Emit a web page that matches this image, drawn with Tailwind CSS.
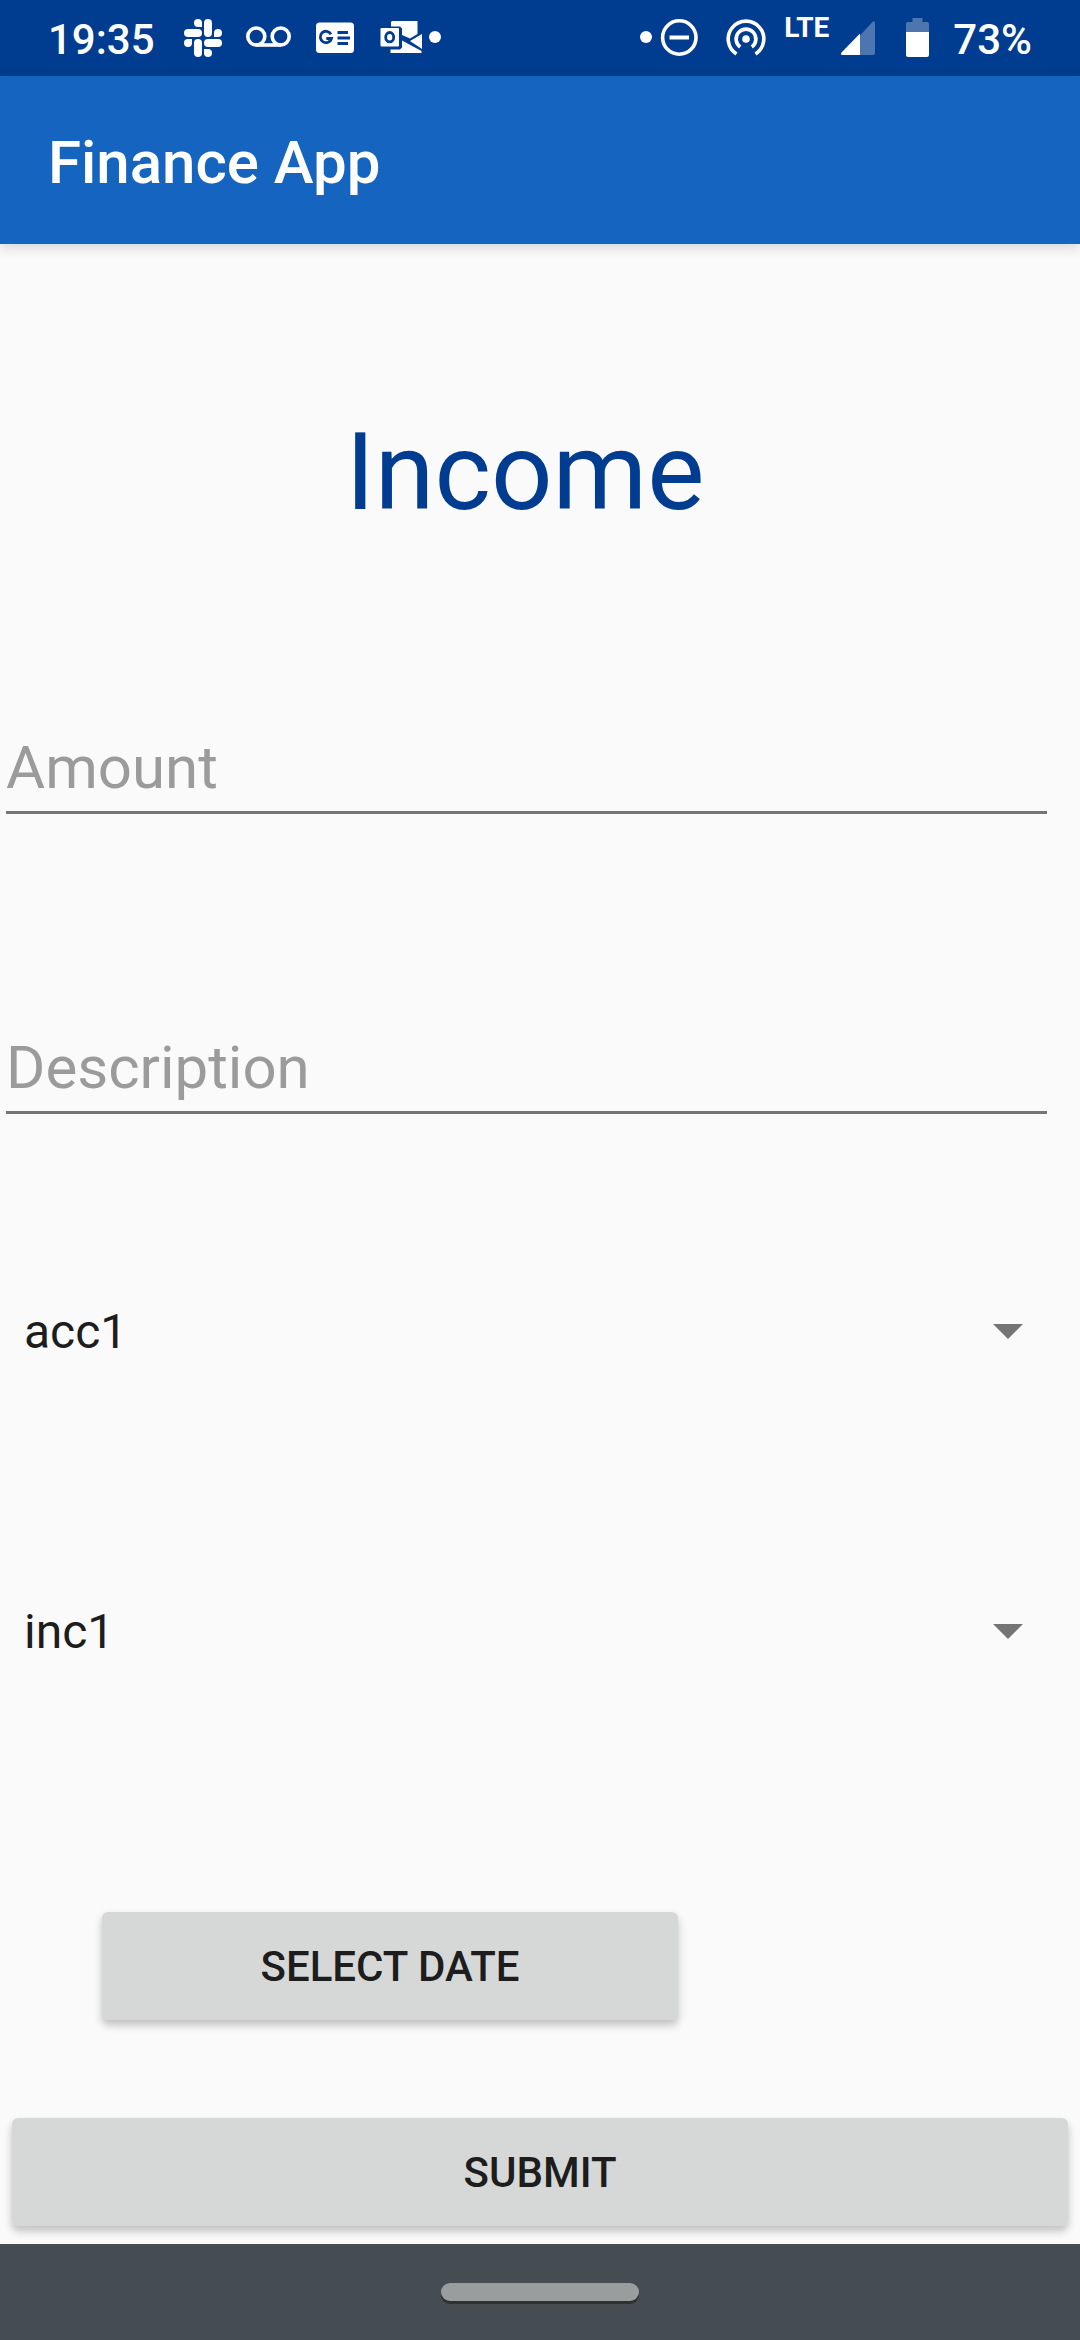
<!DOCTYPE html>
<html lang="en">
<head>
<meta charset="utf-8">
<meta name="viewport" content="width=device-width, initial-scale=1">
<title>Finance App</title>
<script src="https://cdn.jsdelivr.net/npm/@tailwindcss/browser@4"></script>
</head>
<body class="flex min-h-screen flex-col bg-[#fafafa] font-[Roboto,sans-serif] text-[#1d1d1d]">

<!-- System status bar -->
<div class="flex h-[76px] items-center justify-between bg-[#003c8f] px-12 text-[42px] leading-[48px] font-medium text-white">
  <div class="flex items-center">
    <span class="pt-1">19:35</span>
    <svg class="ml-[29px] h-[76px] w-[38px]" viewBox="184 0 38 76" fill="currentColor" aria-hidden="true">
      <rect x="204" y="19" width="8" height="18" rx="4"/>
      <path d="M202 27h-4a4 4 0 1 1 4-4z"/>
      <rect x="184" y="29" width="18" height="8" rx="4"/>
      <path d="M214 37v-4a4 4 0 1 1 4 4z"/>
      <rect x="204" y="39" width="18" height="8" rx="4"/>
      <path d="M204 49h4a4 4 0 1 1-4 4z"/>
      <rect x="194" y="39" width="8" height="18" rx="4"/>
      <path d="M192 39v4a4 4 0 1 1-4-4z"/>
    </svg>
    <svg class="ml-6 h-[76px] w-[45px]" viewBox="246 0 45 76" fill="none" stroke="currentColor" stroke-width="3.6" aria-hidden="true">
      <circle cx="256.300" cy="36.500" r="8.500"/><circle cx="280.700" cy="36.500" r="8.500"/><path d="M256 45h25"/>
    </svg>
    <svg class="ml-[25px] h-[76px] w-[38px]" viewBox="316 0 38 76" fill="none" aria-hidden="true">
      <rect x="316" y="22.500" width="38" height="30.500" rx="3.500" fill="currentColor"/>
      <path d="M331 34.200a5.700 5.700 0 1 0 .5 4.300h-5.200" stroke="#003c8f" stroke-width="2.800"/>
      <path d="M337.500 32.500H348M337.500 38H350M337.500 43.500H348" stroke="#003c8f" stroke-width="2.800"/>
    </svg>
    <svg class="ml-[26px] h-[76px] w-[42px]" viewBox="380 0 42 76" fill="none" aria-hidden="true">
      <path d="M392 21h25.500v13L410 38.500l-8-3.500v-6.500l-2-2h-9V22z" fill="currentColor"/>
      <path d="M402 40.500L421.500 51v2h-31v-3.500h9.500l2-2z" fill="currentColor"/>
      <path d="M422 34v15l-12-8z" fill="currentColor"/>
      <rect x="380.500" y="28" width="18.500" height="18.500" rx="1" fill="currentColor"/>
      <ellipse cx="389.700" cy="37.200" rx="4" ry="4.700" stroke="#003c8f" stroke-width="2.800"/>
    </svg>
    <svg class="ml-[7px] h-[76px] w-3" viewBox="0 0 12 76" fill="currentColor" aria-hidden="true"><circle cx="6" cy="37" r="6"/></svg>
  </div>
  <div class="flex items-center">
    <svg class="h-[76px] w-3" viewBox="0 0 12 76" fill="currentColor" aria-hidden="true"><circle cx="6" cy="37" r="6"/></svg>
    <svg class="ml-2 h-[76px] w-[38px]" viewBox="659 0 38 76" fill="none" stroke="currentColor" aria-hidden="true">
      <circle cx="678.300" cy="37.500" r="16.700" stroke-width="3.600"/><path d="M668.500 37.500h19.500" stroke-width="4"/>
    </svg>
    <svg class="ml-7 h-[76px] w-10" viewBox="725 0 40 76" fill="none" stroke="currentColor" stroke-width="3.600" aria-hidden="true">
      <circle cx="745" cy="39" r="3.800" fill="currentColor" stroke="none"/>
      <path d="M739.200 47a9.900 9.900 0 1 1 11.600 0"/>
      <path d="M735.500 54a17.800 17.800 0 1 1 19 0"/>
    </svg>
    <span class="ml-[18px] self-start text-[28px] leading-[56px] font-bold">LTE</span>
    <svg class="ml-3 h-[76px] w-[34px]" viewBox="841 0 34 76" fill="currentColor" aria-hidden="true">
      <path d="M860 35.500L872.500 22q2.500-2 2.500 1V53q0 2-2 2h-13z" opacity=".3"/>
      <path d="M860 33.500V55h-17.500q-2.500-.5-1-2.500z"/>
    </svg>
    <svg class="ml-[31px] h-[76px] w-[23px]" viewBox="906 0 23 76" fill="currentColor" aria-hidden="true">
      <path d="M906 32v-8q0-2 2-2h4.500v-4h10v4h4.500q2 0 2 2v8z" opacity=".3"/>
      <path d="M906 32h23v23q0 2-2 2h-19q-2 0-2-2z"/>
    </svg>
    <span class="ml-6 pt-1">73%</span>
  </div>
</div>

<header class="z-10 flex h-[168px] items-center bg-[#1565c0] px-12 pt-1.5 shadow-[0_4px_12px_rgba(0,0,0,0.14)]">
  <p class="text-[60px] leading-[72px] font-medium text-white">Finance App</p>
</header>

<main class="flex-1 pt-[156px] pb-[18px]">
  <form class="flex flex-col">
    <h1 class="mr-[30px] text-center text-[108px] leading-[144px] text-[#003c8f]">Income</h1>

    <div class="mt-[180px] mr-[33px] ml-[6px] flex flex-col gap-[210px]">
      <input type="text" inputmode="decimal" aria-label="Amount" placeholder="Amount" class="block h-[90px] w-full rounded-none border-b-3 border-[#757575] bg-transparent text-[60px] leading-[72px] outline-none placeholder:text-[#9b9b9b]">
      <input type="text" aria-label="Description" placeholder="Description" class="block h-[90px] w-full rounded-none border-b-3 border-[#757575] bg-transparent text-[60px] leading-[72px] outline-none placeholder:text-[#9b9b9b]">
    </div>

    <div class="mt-[182px] flex flex-col gap-[228px]">
      <div class="relative">
        <select aria-label="Account" class="block h-[72px] w-full appearance-none bg-transparent px-6 text-[48px] leading-[72px] outline-none"><option>acc1</option></select>
        <svg class="pointer-events-none absolute top-7 right-[57px] h-[15px] w-[30px]" viewBox="0 0 30 15" fill="#757575" aria-hidden="true"><path d="M0 0h30L15 15z"/></svg>
      </div>
      <div class="relative">
        <select aria-label="Income category" class="block h-[72px] w-full appearance-none bg-transparent px-6 text-[48px] leading-[72px] outline-none"><option>inc1</option></select>
        <svg class="pointer-events-none absolute top-7 right-[57px] h-[15px] w-[30px]" viewBox="0 0 30 15" fill="#757575" aria-hidden="true"><path d="M0 0h30L15 15z"/></svg>
      </div>
    </div>

    <button type="button" class="mt-[244px] ml-[102px] h-[108px] w-[576px] rounded-md bg-[#d6d8d7] pt-0.5 text-[42px] leading-[48px] font-medium shadow-[0_5px_8px_rgba(0,0,0,0.24)]">SELECT DATE</button>
    <button type="submit" class="mx-3 mt-[98px] h-[108px] rounded-md bg-[#d6d8d7] pt-0.5 text-[42px] leading-[48px] font-medium shadow-[0_5px_8px_rgba(0,0,0,0.24)]">SUBMIT</button>
  </form>
</main>

<!-- Gesture navigation bar -->
<div class="z-10 flex h-24 justify-center bg-[#454c52] pt-[39px]">
  <div class="h-[18px] w-[198px] rounded-full bg-[#9a9d9e] shadow-[0_3px_0_#2d3233]"></div>
</div>
</body>
</html>
